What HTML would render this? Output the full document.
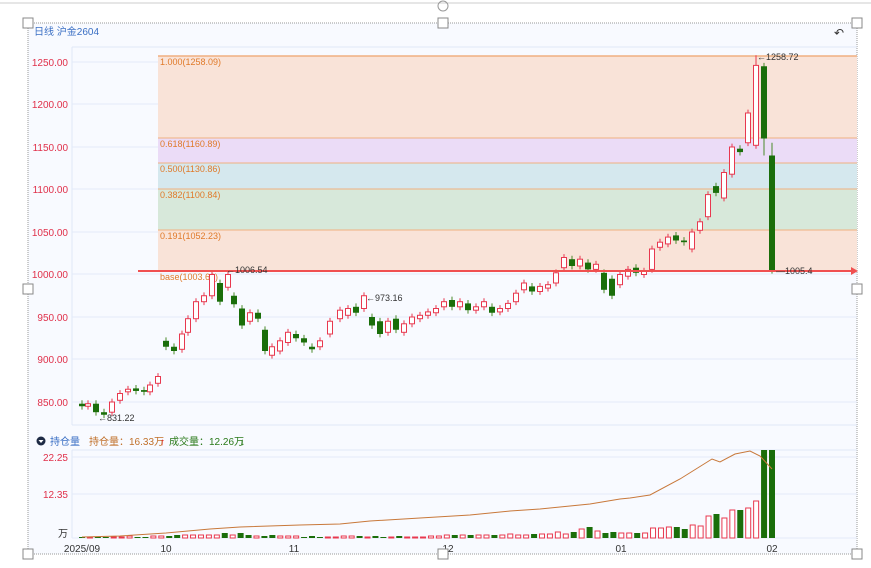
<!DOCTYPE html>
<html><head><meta charset="utf-8"><style>
body{margin:0;width:871px;height:568px;background:#fff;overflow:hidden;font-family:"Liberation Sans","Noto Sans CJK SC",sans-serif;}
svg{position:absolute;left:0;top:0}
</style></head><body>
<svg id="s" width="871" height="568" viewBox="0 0 871 568" font-family="Liberation Sans, Noto Sans CJK SC, sans-serif">
<line x1="0" y1="3" x2="871" y2="3" stroke="#ccc"/>
<rect x="28" y="23" width="829" height="531" fill="#f8faff" stroke="#999" stroke-dasharray="1 1"/>
<text x="34" y="35" font-size="10" fill="#3a6fc4">日线 沪金2604</text>
<text x="834" y="37" font-size="12" fill="#333">↶</text>
<line x1="72" y1="47" x2="857" y2="47" stroke="#dfe8f7"/>
<line x1="72" y1="47" x2="72" y2="425" stroke="#dfe8f7"/>
<line x1="72" y1="425" x2="857" y2="425" stroke="#dfe8f7"/>
<g id="grid"></g>
<rect x="158" y="56" width="699" height="82" fill="#f9e3d8"/>
<rect x="158" y="138" width="699" height="25" fill="#ebdcf7"/>
<rect x="158" y="163" width="699" height="26" fill="#d5e8ee"/>
<rect x="158" y="189" width="699" height="41" fill="#d7e8da"/>
<rect x="158" y="230" width="699" height="41" fill="#f9e3d8"/>
<g stroke="#f0b080" stroke-width="1"><line x1="158" y1="56" x2="857" y2="56" stroke-width="1.5"/><line x1="158" y1="138" x2="857" y2="138"/><line x1="158" y1="163" x2="857" y2="163"/><line x1="158" y1="189" x2="857" y2="189"/><line x1="158" y1="230" x2="857" y2="230"/></g>
<g font-size="9" fill="#e07a2a"><text x="160" y="65">1.000(1258.09)</text><text x="160" y="147">0.618(1160.89)</text><text x="160" y="172">0.500(1130.86)</text><text x="160" y="198">0.382(1100.84)</text><text x="160" y="239">0.191(1052.23)</text><text x="160" y="280">base(1003.63)</text></g>
<g id="c"></g>
<line x1="138" y1="271" x2="852" y2="271" stroke="#f05050" stroke-width="2"/>
<polygon points="851,267 858,271 851,275" fill="#f05050"/>
<g font-size="9" fill="#333"><text x="226" y="273">←1006.54</text><text x="366" y="301">←973.16</text><text x="98" y="421">←831.22</text><text x="757" y="60">←1258.72</text><text x="776" y="274">—1005.4</text></g>
<g font-size="10" fill="#e0304a" text-anchor="end"><text x="68" y="66">1250.00</text><text x="68" y="108">1200.00</text><text x="68" y="151">1150.00</text><text x="68" y="193">1100.00</text><text x="68" y="236">1050.00</text><text x="68" y="278">1000.00</text><text x="68" y="321">950.00</text><text x="68" y="363">900.00</text><text x="68" y="406">850.00</text></g>
<circle cx="41" cy="441" r="4.5" fill="#1e2a44"/><polygon points="38.5,440 43.5,440 41,443" fill="#fff"/>
<text x="50" y="445" font-size="10" fill="#3a6fc4">持仓量</text>
<text x="89" y="445" font-size="10" fill="#c0702a">持仓量：16.33万</text>
<text x="160" y="445" font-size="10" fill="#e02020">↑</text>
<text x="169" y="445" font-size="10" fill="#2a7a1a">成交量：12.26万</text>
<text x="240" y="445" font-size="10" fill="#2a7a1a">↓</text>
<line x1="72" y1="450" x2="857" y2="450" stroke="#dfe8f7"/>
<line x1="72" y1="450" x2="72" y2="538" stroke="#dfe8f7"/>
<line x1="72" y1="457" x2="857" y2="457" stroke="#e3ebf8"/>
<line x1="72" y1="494" x2="857" y2="494" stroke="#e3ebf8"/>
<line x1="72" y1="538" x2="857" y2="538" stroke="#e3ebf8"/>
<g font-size="10" fill="#e0304a" text-anchor="end"><text x="68" y="461">22.25</text><text x="68" y="498">12.35</text></g>
<text x="68" y="537" font-size="10" fill="#333" text-anchor="end">万</text>
<g id="v"></g>
<g font-size="10" fill="#333" text-anchor="middle"><text x="82" y="552">2025/09</text><text x="166" y="552">10</text><text x="294" y="552">11</text><text x="448" y="552">12</text><text x="621" y="552">01</text><text x="772" y="552">02</text></g>
<g fill="#fff" stroke="#888"><rect x="23" y="18" width="10" height="10"/><rect x="438" y="18" width="10" height="10"/><rect x="852" y="18" width="10" height="10"/><rect x="23" y="284" width="10" height="10"/><rect x="852" y="284" width="10" height="10"/><rect x="23" y="549" width="10" height="10"/><rect x="438" y="549" width="10" height="10"/><rect x="852" y="549" width="10" height="10"/></g>
<circle cx="443" cy="6" r="5" fill="none" stroke="#999"/>
</svg>
<script>
var NS="http://www.w3.org/2000/svg";
function el(p,t,a){var e=document.createElementNS(NS,t);for(var k in a)e.setAttribute(k,a[k]);p.appendChild(e);return e;}
var g=document.getElementById('grid');
[62,104,147,189,232,274,317,359,402].forEach(function(y){el(g,'line',{x1:72,y1:y,x2:857,y2:y,stroke:'#e3ebf8'});});
var d=[[82,848,845],[88,845,848],[96,848,838],[104,838,835],[112,838,850],[120,852,860],[128,862,865],[136,866,863],[144,864,862],[150,862,870],[158,872,880],[166,922,915],[174,915,910],[182,912,930],[188,932,948],[196,948,968],[204,968,975],[212,975,1000],[220,990,968],[228,985,1000],[234,975,965],[242,960,940],[250,945,955],[258,955,948],[265,935,910],[272,905,915],[280,910,922],[288,920,932],[296,930,925],[304,925,920],[312,915,912],[320,915,922],[330,930,945],[340,948,958],[348,952,960],[356,962,955],[364,960,975],[372,950,940],[380,945,930],[388,932,945],[396,948,935],[404,932,942],[412,942,950],[420,948,952],[428,952,956],[436,955,960],[444,962,968],[452,970,962],[460,962,968],[468,966,958],[476,958,962],[484,962,968],[492,962,955],[500,956,960],[508,960,966],[516,968,978],[524,982,990],[532,986,980],[540,980,986],[548,984,988],[556,990,1002],[564,1008,1020],[572,1018,1010],[580,1010,1018],[588,1014,1006],[596,1006,1012],[604,1002,982],[612,995,975],[620,988,1000],[628,998,1006],[636,1008,1002],[644,1000,1004],[652,1006,1030],[660,1032,1038],[668,1036,1044],[676,1046,1040],[684,1040,1038],[692,1030,1050],[700,1052,1062],[708,1068,1094],[716,1104,1096],[724,1090,1120],[732,1118,1150],[740,1148,1144],[748,1155,1190],[756,1152,1246],[764,1245,1160],[772,1140,1005]];
var c=document.getElementById('c');
function Y(p){return 62+(1250-p)*0.85;}
d.forEach(function(a){var x=a[0],o=a[1],cl=a[2],up=cl>=o;var hi=Math.max(o,cl)+4,lo=Math.min(o,cl)-4;if(x==756)hi=1258;if(x==772)hi=1155;if(x==764)lo=1140;
var col=up?'#e8384f':'#1a6e0a';el(c,'line',{x1:x,y1:Y(hi),x2:x,y2:Y(lo),stroke:up?'#e8384f':'#4a8a2a'});
var t=Y(Math.max(o,cl)),h=Math.max(1.5,Math.abs(o-cl)*0.85);
if(up)el(c,'rect',{x:x-2.5,y:t,width:5,height:h,fill:'#fff',stroke:col});else el(c,'rect',{x:x-3,y:t,width:6,height:h,fill:col});});
var v=document.getElementById('v');
var vols=[1,1,1,1,1,1,2,1,1,2,2,2,3,3,3,3,3,3,5,3,5,3,2,2,3,2,2,2,1,2,1,1,1,2,2,2,1,2,1,1,2,1,1,1,2,2,3,3,3,3,3,3,3,3,4,3,3,4,4,4,6,4,6,9,11,7,5,6,5,5,5,5,10,10,11,11,9,13,12,22,24,20,28,28,30,37,88,88];
var y0=538;
vols.forEach(function(h,i){var x=82+i*(690/(vols.length-1));var d0=d[Math.min(d.length-1,Math.round(i*(d.length-1)/(vols.length-1)))];var up=d0[2]>=d0[1];
if(up)el(v,'rect',{x:x-2.5,y:y0-h,width:5,height:h,fill:'#fff',stroke:'#e8384f'});else el(v,'rect',{x:x-3,y:y0-h,width:6,height:h,fill:'#1a6e0a'});});
var oi=[[82,537],[120,536],[166,533],[210,529],[240,527],[300,525],[340,524],[370,521],[420,518],[470,515],[510,511],[540,509],[590,504],[620,499],[630,498],[650,495],[680,479],[712,459],[720,462],[735,454],[750,451],[760,456],[772,469]];
el(v,'polyline',{points:oi.map(function(p){return p.join(',');}).join(' '),fill:'none',stroke:'#c8783a','stroke-width':1});
</script>
</body></html>
